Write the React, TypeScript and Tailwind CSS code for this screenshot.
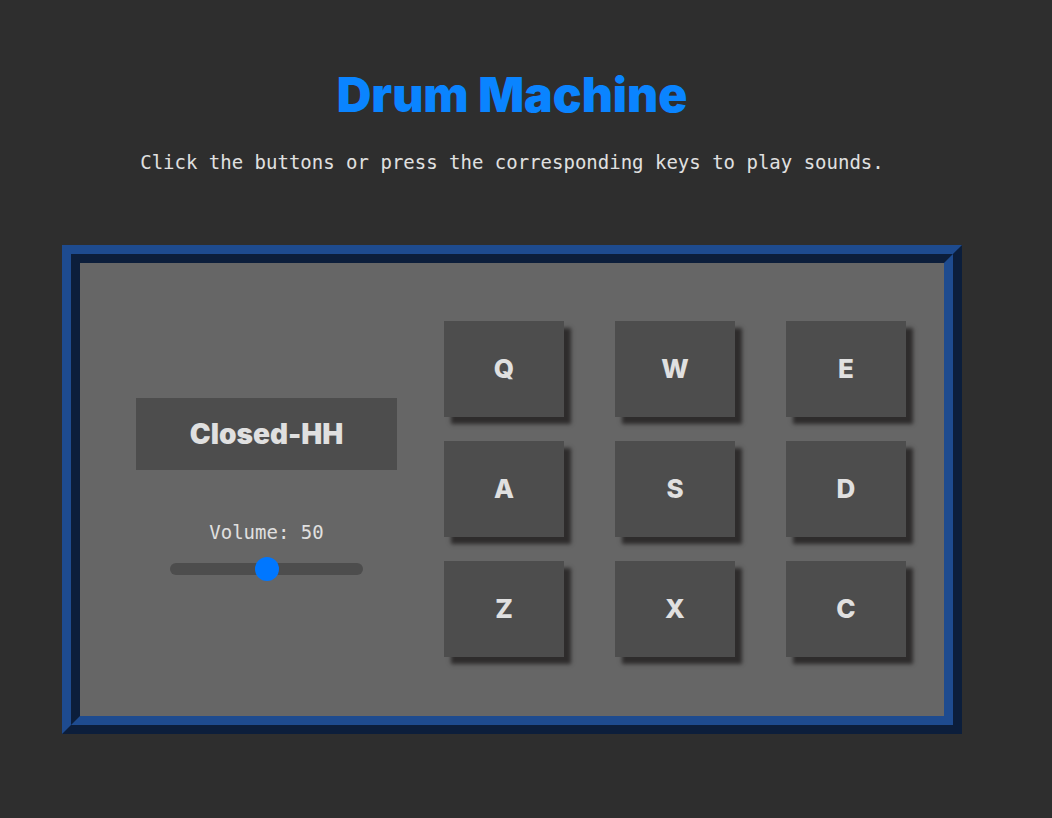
import { useState } from "react";

const pads = [
  { key: "Q", sound: "Heater-1" },
  { key: "W", sound: "Heater-2" },
  { key: "E", sound: "Heater-3" },
  { key: "A", sound: "Heater-4" },
  { key: "S", sound: "Clap" },
  { key: "D", sound: "Open-HH" },
  { key: "Z", sound: "Kick-n-Hat" },
  { key: "X", sound: "Kick" },
  { key: "C", sound: "Closed-HH" },
];

export default function App() {
  const [sound, setSound] = useState("Closed-HH");
  const [volume, setVolume] = useState(50);

  return (
    <main className="flex min-h-screen flex-col items-center bg-[#2e2e2e] pt-[65px] pr-7 pb-20 font-['DejaVu_Sans_Mono',monospace] text-[#e0e0e0]">
      <h1 className="text-center font-['Inter',sans-serif] text-5xl leading-[60px] font-black text-[#0a84ff]">
        Drum Machine
      </h1>
      <p className="mt-[23px] text-center text-[19px] leading-7">
        Click the buttons or press the corresponding keys to play sounds.
      </p>
      <section className="mt-[69px] flex w-full max-w-[900px] items-center justify-between border-[18px] border-[#1e4b8f] bg-[#666666] pt-[58px] pr-[38px] pb-[59px] pl-14 [border-style:ridge]">
        <div className="flex w-[261px] flex-col items-center pb-1.5">
          <output
            id="display"
            className="flex h-[72px] w-full items-center justify-center bg-[#4d4d4d] font-['Inter',sans-serif] text-[28px] font-black"
          >
            {sound}
          </output>
          <label htmlFor="volume" className="mt-12 text-[19px] leading-7">
            Volume: {volume}
          </label>
          <input
            id="volume"
            type="range"
            min={0}
            max={100}
            value={volume}
            onChange={(e) => setVolume(Number(e.target.value))}
            className="mt-[17px] h-3 w-[193px] cursor-pointer appearance-none rounded-full bg-[#4d4d4d] [&::-webkit-slider-thumb]:size-6 [&::-webkit-slider-thumb]:appearance-none [&::-webkit-slider-thumb]:rounded-full [&::-webkit-slider-thumb]:bg-[#0077ff]"
          />
        </div>
        <div className="grid grid-cols-3 gap-x-[51px] gap-y-6">
          {pads.map((pad) => (
            <button
              key={pad.key}
              type="button"
              onClick={() => setSound(pad.sound)}
              className="h-24 w-[120px] cursor-pointer bg-[#4d4d4d] pb-0.5 font-['Inter',sans-serif] text-[26px] font-extrabold shadow-[7px_7px_4px_#2e2c2c]"
            >
              {pad.key}
            </button>
          ))}
        </div>
      </section>
    </main>
  );
}
